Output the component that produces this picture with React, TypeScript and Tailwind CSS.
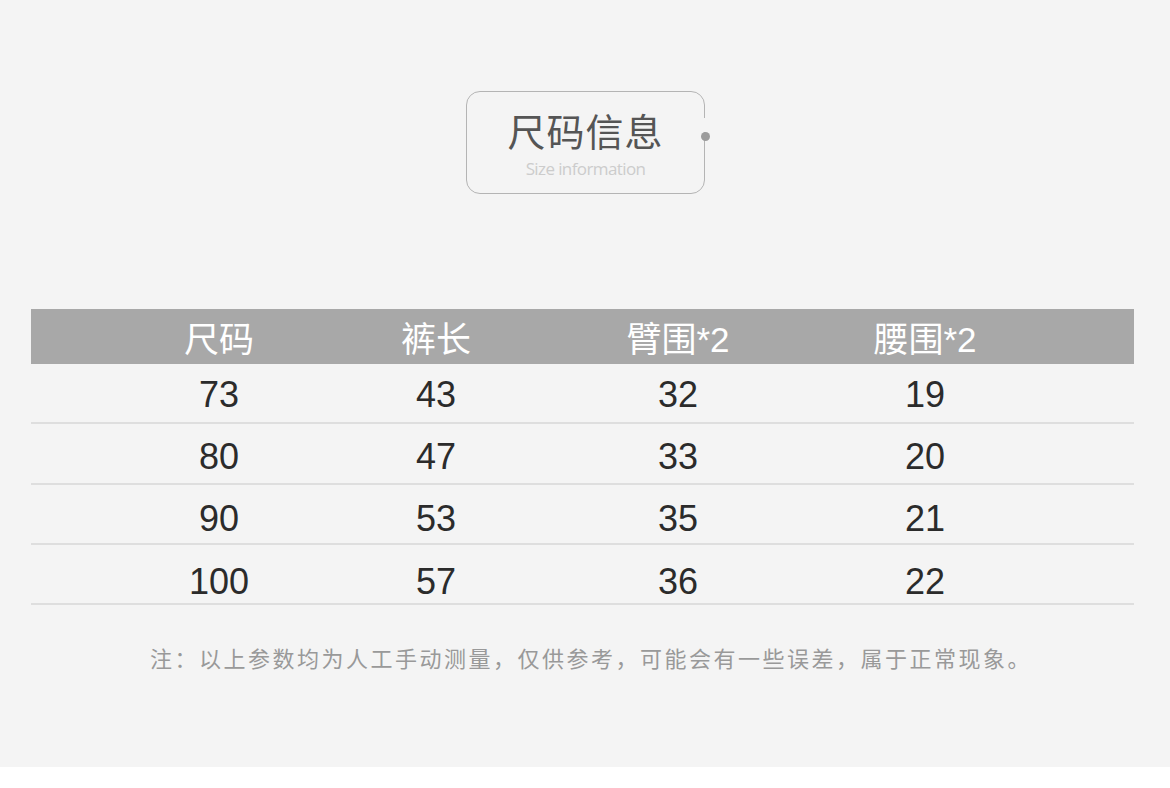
import React from "react";

const cjk = { fontFamily: '"Liberation Sans", "Noto Sans CJK SC", sans-serif' };

const headers = ["尺码", "裤长", "臂围*2", "腰围*2"];
const rows = [
  { cells: ["73", "43", "32", "19"], cls: "h-[60px] pt-[4px]" },
  { cells: ["80", "47", "33", "20"], cls: "h-[61px] pt-[7px]" },
  { cells: ["90", "53", "35", "21"], cls: "h-[60px] pt-[10px]" },
  { cells: ["100", "57", "36", "22"], cls: "h-[60px] pt-[15px]" },
];

function Cells({ items, className }: { items: string[]; className: string }) {
  return (
    <div className="flex pl-[128px]">
      <div className={`w-[120px] text-center ${className}`}>{items[0]}</div>
      <div className={`ml-[97px] w-[120px] text-center ${className}`}>{items[1]}</div>
      <div className={`ml-[122px] w-[120px] text-center ${className}`}>{items[2]}</div>
      <div className={`ml-[127px] w-[120px] text-center ${className}`}>{items[3]}</div>
    </div>
  );
}

export default function App() {
  return (
    <div className="w-[1170px] h-[788px] bg-white" style={cjk}>
      <div className="h-[767px] bg-[#f4f4f4] flex flex-col">
        <div className="flex justify-center pt-[91px] pl-[1px]">
          <div className="relative w-[239px] h-[103px] rounded-[14px] border-[1.5px] border-[#b4b4b4] flex flex-col items-center">
            <div className="absolute right-[-4px] top-[26px] w-[6px] h-[14px] bg-[#f4f4f4]" />
            <div className="absolute right-[-6px] top-[40px] w-[9px] h-[9px] rounded-full bg-[#9c9c9c]" />
            <div className="mt-[15px] text-[38px] leading-[52px] text-[#555555] tracking-[1px]">尺码信息</div>
            <div className="mt-[-1px] text-[17px] leading-[22px] text-[#cccccc] tracking-[-0.6px]" style={{ fontFamily: '"Open Sans", sans-serif' }}>
              Size information
            </div>
          </div>
        </div>

        <div className="mt-[115px] mx-[31px] w-[1103px]">
          <div className="h-[55px] bg-[#a8a8a8] flex items-center pt-[6px]">
            <Cells items={headers} className="text-[35px] leading-[40px] text-white" />
          </div>
          {rows.map((r, i) => (
            <div key={i} className={`${r.cls} border-b-2 border-[#dedede] flex items-center`}>
              <Cells items={r.cells} className="text-[36px] leading-[40px] text-[#2b2b2b]" />
            </div>
          ))}
        </div>

        <div className="mt-[40px] text-center text-[22px] leading-[30px] tracking-[2.5px] text-[#999999] pl-[12px]">
          注：以上参数均为人工手动测量，仅供参考，可能会有一些误差，属于正常现象。
        </div>
      </div>
    </div>
  );
}
